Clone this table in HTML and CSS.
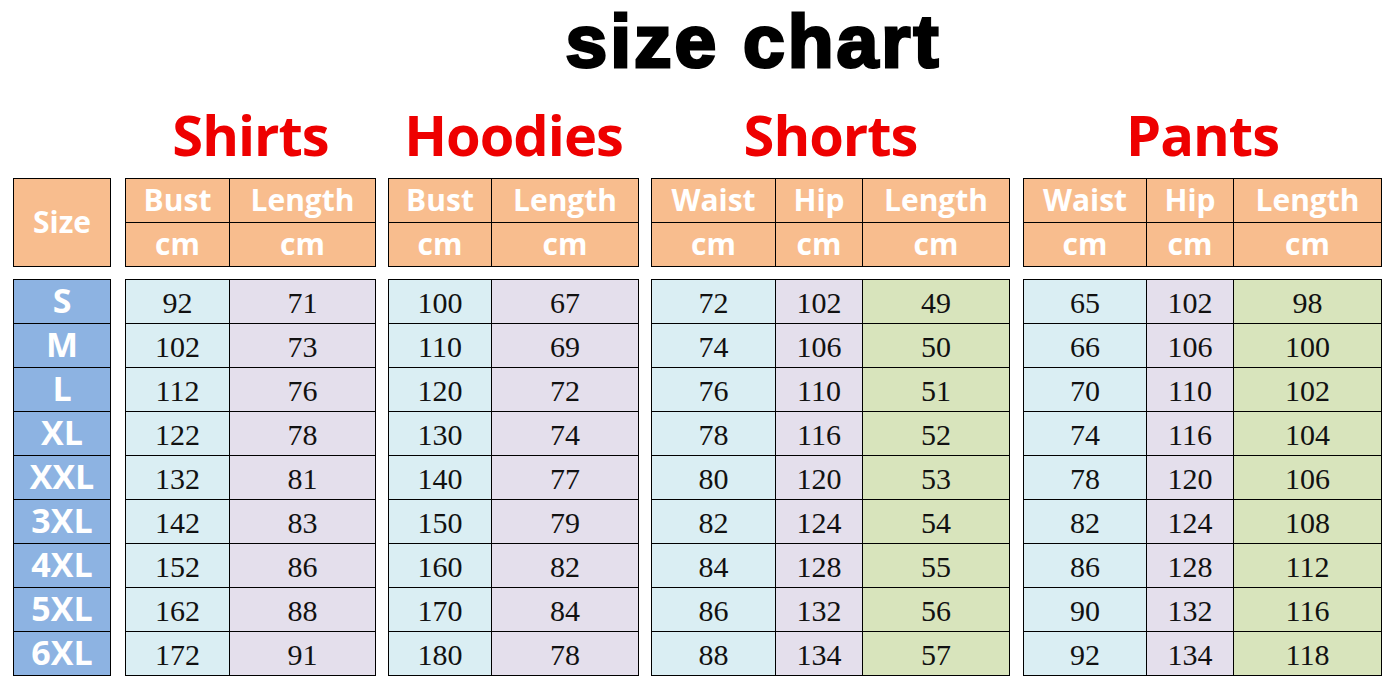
FILE: index.html
```html
<!DOCTYPE html>
<html lang="en">
<head>
<meta charset="utf-8">
<title>size chart</title>
<link rel="stylesheet" href="styles.css">
</head>
<body>
<div class="page">
  <h1 class="title">size chart</h1>
  <div class="chart">
    <section class="group g-size">
      <h2 class="gtitle">&nbsp;</h2>
      <div class="hdr cols-size">
        <div class="h span2">Size</div>
      </div>
      <div class="tbl cols-size">
        <div class="c sz">S</div><div class="c sz">M</div><div class="c sz">L</div>
        <div class="c sz">XL</div><div class="c sz">XXL</div><div class="c sz">3XL</div>
        <div class="c sz">4XL</div><div class="c sz">5XL</div><div class="c sz">6XL</div>
      </div>
    </section>

    <section class="group">
      <h2 class="gtitle">Shirts</h2>
      <div class="hdr cols-shirts">
        <div class="h">Bust</div><div class="h">Length</div>
        <div class="h">cm</div><div class="h">cm</div>
      </div>
      <div class="tbl cols-shirts">
        <div class="c b">92</div><div class="c p">71</div>
        <div class="c b">102</div><div class="c p">73</div>
        <div class="c b">112</div><div class="c p">76</div>
        <div class="c b">122</div><div class="c p">78</div>
        <div class="c b">132</div><div class="c p">81</div>
        <div class="c b">142</div><div class="c p">83</div>
        <div class="c b">152</div><div class="c p">86</div>
        <div class="c b">162</div><div class="c p">88</div>
        <div class="c b">172</div><div class="c p">91</div>
      </div>
    </section>

    <section class="group">
      <h2 class="gtitle">Hoodies</h2>
      <div class="hdr cols-hoodies">
        <div class="h">Bust</div><div class="h">Length</div>
        <div class="h">cm</div><div class="h">cm</div>
      </div>
      <div class="tbl cols-hoodies">
        <div class="c b">100</div><div class="c p">67</div>
        <div class="c b">110</div><div class="c p">69</div>
        <div class="c b">120</div><div class="c p">72</div>
        <div class="c b">130</div><div class="c p">74</div>
        <div class="c b">140</div><div class="c p">77</div>
        <div class="c b">150</div><div class="c p">79</div>
        <div class="c b">160</div><div class="c p">82</div>
        <div class="c b">170</div><div class="c p">84</div>
        <div class="c b">180</div><div class="c p">78</div>
      </div>
    </section>

    <section class="group">
      <h2 class="gtitle">Shorts</h2>
      <div class="hdr cols-shorts">
        <div class="h">Waist</div><div class="h">Hip</div><div class="h">Length</div>
        <div class="h">cm</div><div class="h">cm</div><div class="h">cm</div>
      </div>
      <div class="tbl cols-shorts">
        <div class="c b">72</div><div class="c p">102</div><div class="c g">49</div>
        <div class="c b">74</div><div class="c p">106</div><div class="c g">50</div>
        <div class="c b">76</div><div class="c p">110</div><div class="c g">51</div>
        <div class="c b">78</div><div class="c p">116</div><div class="c g">52</div>
        <div class="c b">80</div><div class="c p">120</div><div class="c g">53</div>
        <div class="c b">82</div><div class="c p">124</div><div class="c g">54</div>
        <div class="c b">84</div><div class="c p">128</div><div class="c g">55</div>
        <div class="c b">86</div><div class="c p">132</div><div class="c g">56</div>
        <div class="c b">88</div><div class="c p">134</div><div class="c g">57</div>
      </div>
    </section>

    <section class="group g-pants">
      <h2 class="gtitle">Pants</h2>
      <div class="hdr cols-pants">
        <div class="h">Waist</div><div class="h">Hip</div><div class="h">Length</div>
        <div class="h">cm</div><div class="h">cm</div><div class="h">cm</div>
      </div>
      <div class="tbl cols-pants">
        <div class="c b">65</div><div class="c p">102</div><div class="c g">98</div>
        <div class="c b">66</div><div class="c p">106</div><div class="c g">100</div>
        <div class="c b">70</div><div class="c p">110</div><div class="c g">102</div>
        <div class="c b">74</div><div class="c p">116</div><div class="c g">104</div>
        <div class="c b">78</div><div class="c p">120</div><div class="c g">106</div>
        <div class="c b">82</div><div class="c p">124</div><div class="c g">108</div>
        <div class="c b">86</div><div class="c p">128</div><div class="c g">112</div>
        <div class="c b">90</div><div class="c p">132</div><div class="c g">116</div>
        <div class="c b">92</div><div class="c p">134</div><div class="c g">118</div>
      </div>
    </section>
  </div>
</div>
</body>
</html>
```

FILE: styles.css
```css
* { box-sizing: border-box; }
html, body { margin: 0; padding: 0; background: #ffffff; }
body { width: 1392px; height: 690px; overflow: hidden; }

.page { padding-top: 1px; }

.title {
  margin: 0;
  height: 80px;
  line-height: 80px;
  font-family: "Liberation Sans", Arial, sans-serif;
  font-weight: 700;
  font-size: 75px;
  letter-spacing: 3px;
  -webkit-text-stroke: 3px #000;
  color: #000;
  text-align: center;
  padding-left: 115px;
}

.chart {
  display: flex;
  align-items: flex-start;
  gap: 12px;
  padding-left: 13px;
  margin-top: 18px;
}
.g-size { margin-right: 2px; }
.g-pants { margin-left: 1px; }

.group { display: flex; flex-direction: column; }

.gtitle {
  margin: 0 0 9px;
  height: 70px;
  line-height: 70px;
  font-family: "Open Sans", "Noto Sans", sans-serif;
  font-weight: 700;
  font-size: 56px;
  letter-spacing: -1px;
  color: #ee0000;
  text-align: center;
  white-space: nowrap;
}

.hdr, .tbl {
  display: grid;
  gap: 1px;
  padding: 1px;
  background: #000;
}
.hdr { grid-template-rows: 43px 43px; }
.tbl { grid-auto-rows: 43px; margin-top: 12px; }

.cols-size { grid-template-columns: 96px; }
.cols-shirts { grid-template-columns: 103px 145px; }
.cols-hoodies { grid-template-columns: 102px 146px; }
.cols-shorts { grid-template-columns: 123px 86px 146px; }
.cols-pants { grid-template-columns: 122px 86px 147px; }

.h {
  background: #f8bd8e;
  color: #fff;
  font-family: "Open Sans", "Noto Sans", sans-serif;
  font-weight: 700;
  font-size: 30px;
  display: flex;
  align-items: center;
  justify-content: center;
  line-height: 1;
  padding-bottom: 2px;
}
.span2 { grid-row: span 2; }

.c {
  display: flex;
  align-items: center;
  justify-content: center;
  font-family: "Liberation Serif", "Times New Roman", serif;
  font-size: 30px;
  color: #111;
  line-height: 1;
  padding-top: 3px;
}
.sz {
  background: #8db3e2;
  color: #fff;
  font-family: "Open Sans", "Noto Sans", sans-serif;
  font-weight: 700;
  font-size: 34px;
  padding-top: 0;
  padding-bottom: 4px;
}
.b { background: #daeef3; }
.p { background: #e4dfec; }
.g { background: #d8e4bc; }
```
